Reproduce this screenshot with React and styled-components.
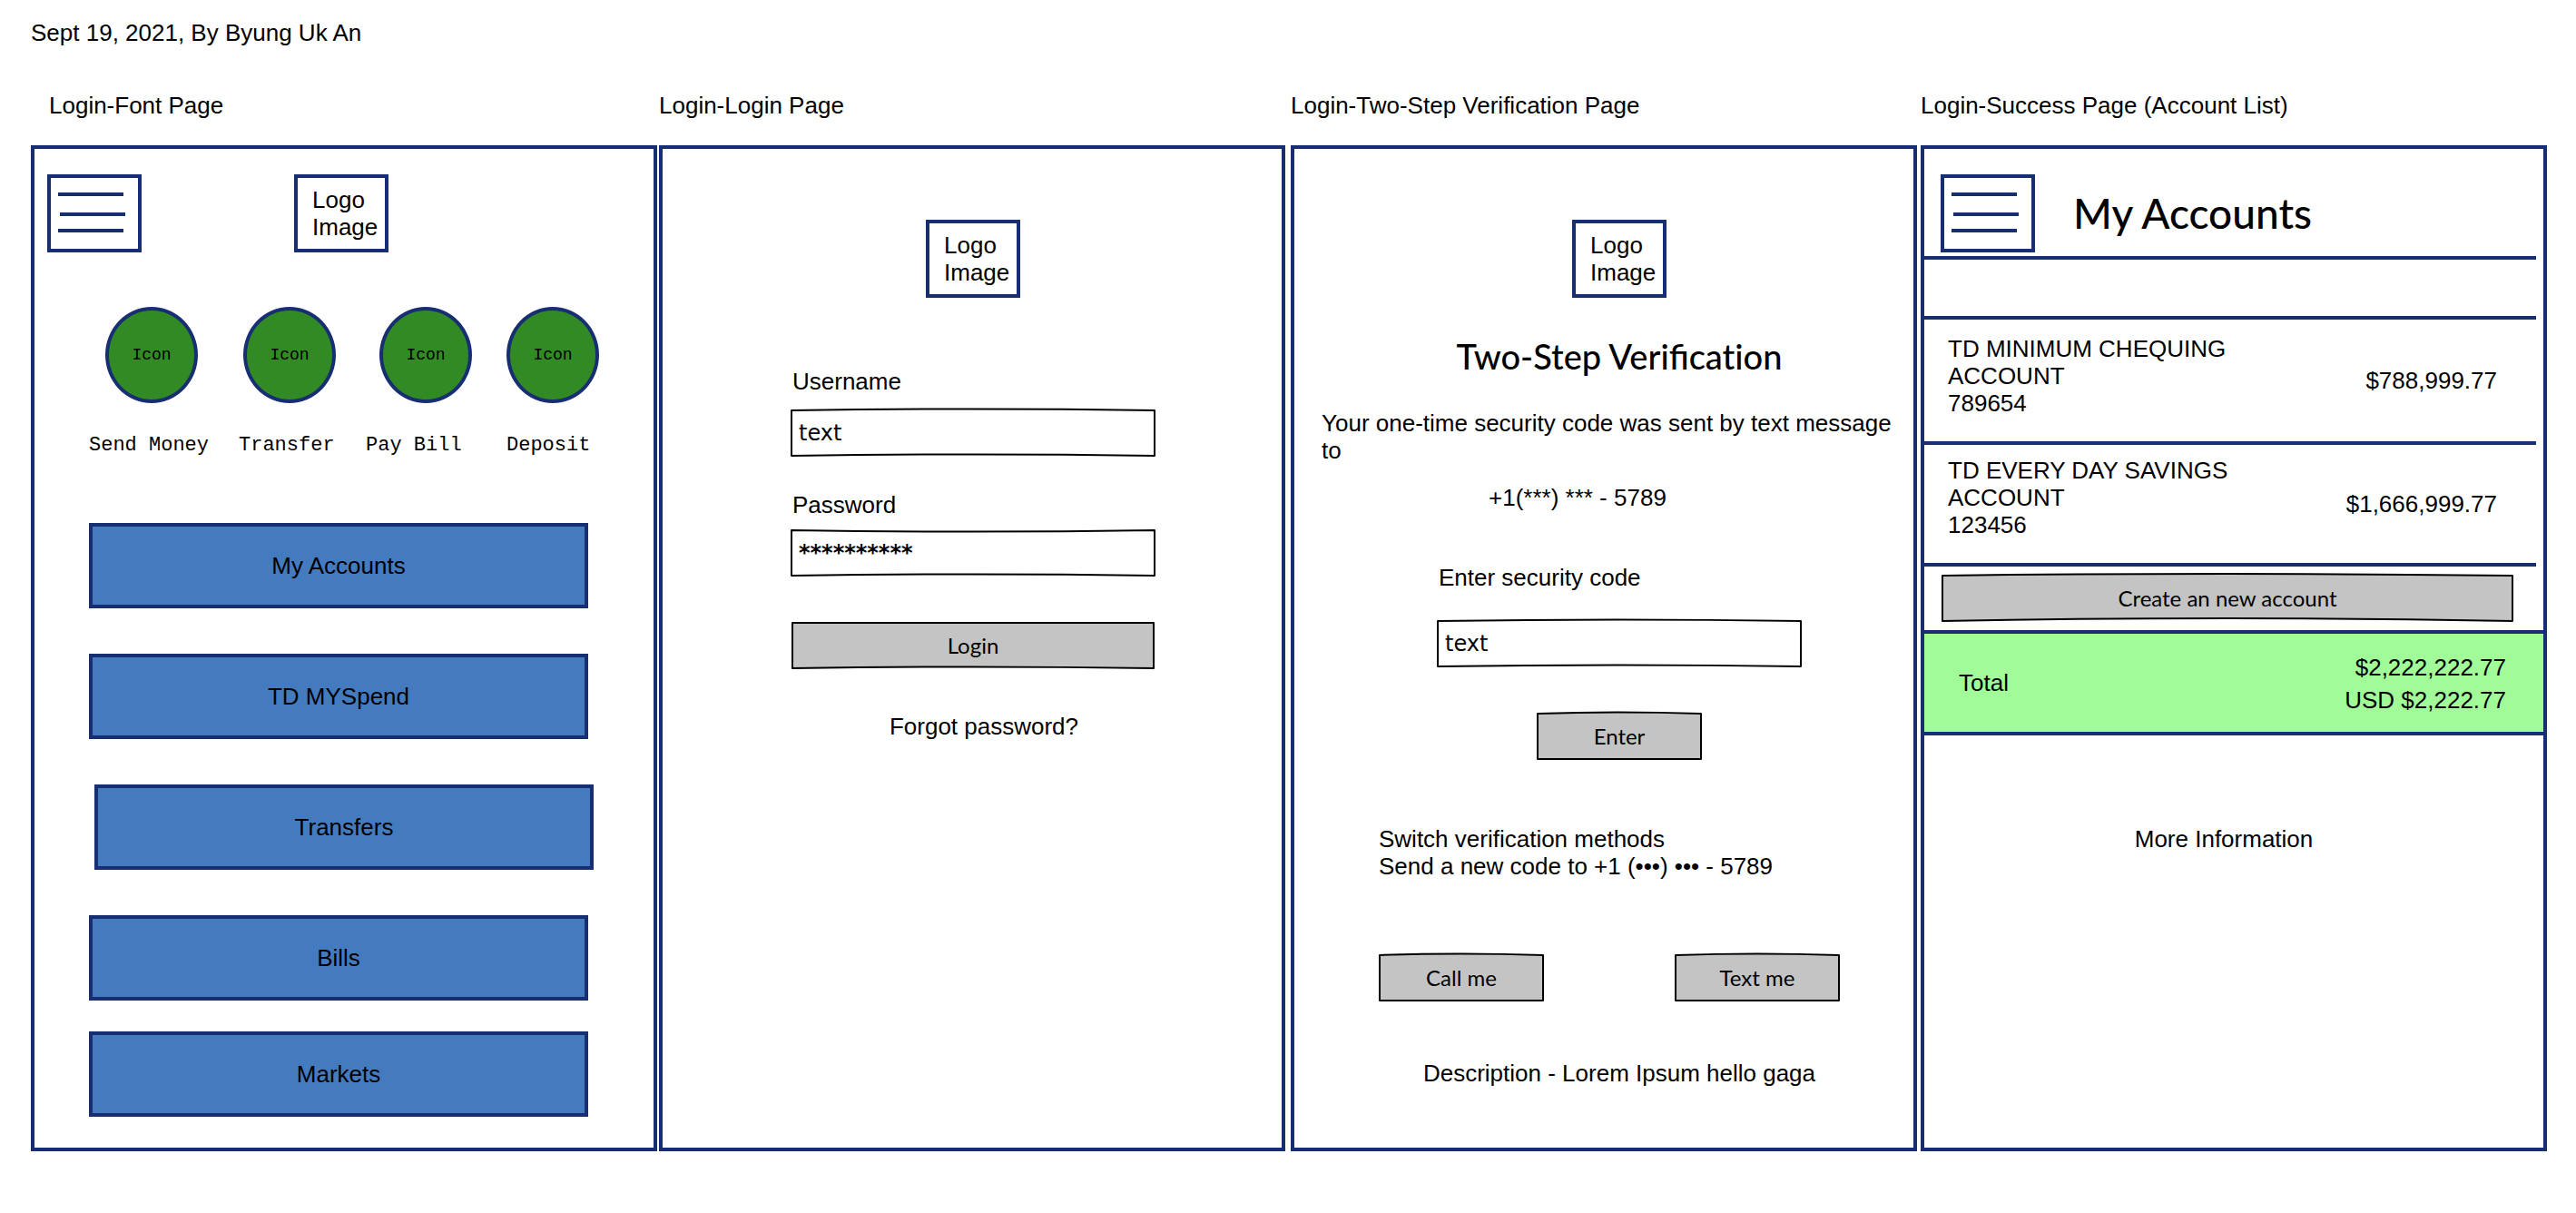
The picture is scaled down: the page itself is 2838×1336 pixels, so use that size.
import React from "react";
import styled, { createGlobalStyle } from "styled-components";

const navy = "#182e73";
const blue = "#447bbf";
const green = "#328a24";
const mint = "#a0fb98";
const grey = "#c4c4c4";

const sans = '"Liberation Sans", Arial, sans-serif';
const mono = '"Courier New", "Liberation Mono", monospace';
const lato = "Lato, sans-serif";
const hand = '"Comic Sans MS", "DejaVu Sans", sans-serif';

const GlobalStyle = createGlobalStyle`
  *, *::before, *::after { box-sizing: border-box; }
  body {
    margin: 0;
    background: #fff;
    color: #000;
    font: 26px/30px ${sans};
  }
  h1, h2, p, figure { margin: 0; font-weight: 400; }
  a { color: inherit; text-decoration: none; }
  button { cursor: pointer; color: inherit; }
`;

const Board = styled.main`
  padding: 21px 32px 68px 34px;
`;

const Note = styled.p`
  margin-bottom: 50px;
`;

const Screens = styled.div`
  display: flex;
  align-items: stretch;
`;

const Screen = styled.figure`
  flex: 1 1 0;
  min-width: 0;
  display: flex;
  flex-direction: column;
  margin-right: ${(p) => p.$after || 0}px;
`;

const Caption = styled.figcaption`
  margin-bottom: 29px;
  padding-left: ${(p) => (p.$indent ? 20 : 0)}px;
`;

const Frame = styled.section`
  flex: 1;
  display: flex;
  flex-direction: column;
  border: 4px solid ${navy};
`;

/* shared pieces */

const MenuBox = styled.button`
  width: 104px;
  height: 86px;
  padding: 0;
  border: 4px solid ${navy};
  background: #fff;
  display: block;
`;

const LogoBox = styled.div`
  width: 104px;
  height: 86px;
  border: 4px solid ${navy};
  padding: 9px 0 0 16px;
`;

const SketchBox = styled.div`
  position: relative;
  width: ${(p) => p.$width || "100%"};
  height: 52px;
`;

const SketchLine = styled.svg`
  position: absolute;
  inset: 1px;
  width: calc(100% - 2px);
  height: calc(100% - 2px);
  overflow: visible;
`;

const SketchButton = styled.button`
  position: relative;
  width: 100%;
  height: 100%;
  border: 0;
  padding: 0;
  background: transparent;
  font: 24px/30px ${lato};
`;

const SketchInput = styled.input`
  position: relative;
  display: block;
  width: 100%;
  height: 100%;
  border: 0;
  padding: 0 9px;
  background: transparent;
  color: #000;
  font: ${(p) => (p.$masked ? 700 : 400)} 24px/30px ${hand};
`;

const Field = styled.div`
  display: flex;
  flex-direction: column;
  gap: ${(p) => p.$gap}px;
  width: 402px;
`;

const FieldLabel = styled.label`
  padding-left: 2px;
`;

/* front page */

const TopBar = styled.header`
  display: flex;
  align-items: center;
  gap: 168px;
  padding: 28px 14px 0;
`;

const IconRow = styled.div`
  display: grid;
  grid-template-columns: 152fr 150fr 140fr 102fr;
  margin: 60px 60px 0 78px;
`;

const IconCircle = styled.button`
  width: 102px;
  height: 106px;
  border: 4px solid ${navy};
  border-radius: 50%;
  padding: 0;
  background: ${green};
  font: 18px/22px ${mono};
`;

const IconLabels = styled.div`
  display: grid;
  grid-template-columns: 165fr 140fr 155fr 94fr;
  margin: 34px 68px 0 60px;
  font: 22px/26px ${mono};
  white-space: nowrap;
`;

const MainNav = styled.nav`
  display: flex;
  flex-direction: column;
  padding: 72px 66px 34px 60px;
`;

const NavButton = styled.button`
  flex: none;
  width: 550px;
  height: 94px;
  margin-top: ${(p) => p.$gap}px;
  margin-left: ${(p) => (p.$stepped ? 6 : 0)}px;
  border: 4px solid ${navy};
  background: ${blue};
  font: 26px/30px ${sans};
`;

/* login page */

const LoginForm = styled.form`
  display: flex;
  flex-direction: column;
  align-items: center;
  padding: 78px 0 0 2px;
`;

const Fields = styled.div`
  display: flex;
  flex-direction: column;
  gap: 38px;
  margin: 77px 0 50px;
`;

const ForgotLink = styled.a`
  margin-top: 48px;
  padding-left: 24px;
`;

/* two-step page */

const Stack = styled.div`
  display: flex;
  flex-direction: column;
  align-items: center;
  padding: ${(p) => p.$top}px 0 0 34px;
`;

const StepTitle = styled.h1`
  margin-top: 42px;
  font: 500 38px/44px ${lato};
  white-space: nowrap;
`;

const SentNote = styled.p`
  padding: 37px 22px 0 30px;
`;

const Phone = styled.p`
  padding: 22px 0 0 214px;
`;

const EnterRow = styled.div`
  margin: 50px 0 72px;
`;

const Methods = styled.div`
  width: 530px;
`;

const MethodButtons = styled.div`
  display: flex;
  gap: 144px;
  margin: 82px 0 64px;
`;

/* account list page */

const AccountsHeader = styled.header`
  display: flex;
  align-items: center;
  gap: 42px;
  margin-right: 8px;
  padding: 28px 18px 4px;
  border-bottom: 4px solid ${navy};
`;

const AccountsTitle = styled.h1`
  font: 500 46px/58px ${lato};
`;

const EmptyStrip = styled.div`
  height: 66px;
  margin-right: 8px;
  border-bottom: 4px solid ${navy};
`;

const Accounts = styled.div`
  padding-right: 8px;
`;

const AccountTable = styled.table`
  width: 100%;
  border-spacing: 0;
`;

const AccountName = styled.th`
  padding: ${(p) => p.$top}px 0 27px 26px;
  border-bottom: 4px solid ${navy};
  text-align: left;
  font-weight: 400;
`;

const NameText = styled.div`
  width: 330px;
`;

const Amount = styled.td`
  padding: 0 43px 0 0;
  border-bottom: 4px solid ${navy};
  text-align: right;
`;

const CreateRow = styled.div`
  padding: 9px 33px 9px 19px;
`;

const TotalBand = styled.div`
  display: flex;
  align-items: center;
  justify-content: space-between;
  height: 116px;
  padding: 0 41px 0 38px;
  border: solid ${navy};
  border-width: 4px 0;
  background: ${mint};
`;

const TotalAmounts = styled.div`
  display: grid;
  gap: 6px;
  padding-top: 2px;
  text-align: right;
`;

const MoreLink = styled.a`
  align-self: center;
  margin-top: 99px;
  padding-right: 22px;
`;

/* Hand-drawn rectangle: `top` and `bottom` lift the middle of each edge. */
function Sketch({ width, top = 0, bottom = 0, fill = "#fff", children }) {
  return (
    <SketchBox $width={width}>
      <SketchLine viewBox="0 0 100 50" preserveAspectRatio="none" aria-hidden="true">
        <path
          d={`M0 0 Q50 ${-2 * top} 100 0 V50 Q50 ${50 - 2 * bottom} 0 50 Z`}
          fill={fill}
          stroke="#000"
          strokeWidth="2"
          strokeLinejoin="round"
          vectorEffect="non-scaling-stroke"
        />
      </SketchLine>
      {children}
    </SketchBox>
  );
}

function Menu() {
  return (
    <MenuBox type="button" aria-label="Menu">
      <svg width="96" height="78" viewBox="0 0 96 78" display="block" aria-hidden="true">
        <path d="M8 18H80M10 40H82M8 58H80" stroke={navy} strokeWidth="4" />
      </svg>
    </MenuBox>
  );
}

function Logo() {
  return (
    <LogoBox>
      Logo
      <br />
      Image
    </LogoBox>
  );
}

const shortcuts = [
  ["send", "Send Money"],
  ["transfer", "Transfer"],
  ["pay", "Pay Bill"],
  ["deposit", "Deposit"],
];

const links = [
  { text: "My Accounts", gap: 0 },
  { text: "TD MYSpend", gap: 50 },
  { text: "Transfers", gap: 50, stepped: true },
  { text: "Bills", gap: 50 },
  { text: "Markets", gap: 34 },
];

const accounts = [
  { name: "TD MINIMUM CHEQUING ACCOUNT", number: "789654", amount: "$788,999.77", top: 17 },
  { name: "TD EVERY DAY SAVINGS ACCOUNT", number: "123456", amount: "$1,666,999.77", top: 13 },
];

function FrontPage() {
  return (
    <Frame>
      <TopBar>
        <Menu />
        <Logo />
      </TopBar>
      <IconRow>
        {shortcuts.map(([id]) => (
          <IconCircle key={id} id={id} type="button">
            Icon
          </IconCircle>
        ))}
      </IconRow>
      <IconLabels>
        {shortcuts.map(([id, text]) => (
          <label key={id} htmlFor={id}>
            {text}
          </label>
        ))}
      </IconLabels>
      <MainNav>
        {links.map((l) => (
          <NavButton key={l.text} type="button" $gap={l.gap} $stepped={l.stepped}>
            {l.text}
          </NavButton>
        ))}
      </MainNav>
    </Frame>
  );
}

function LoginPage() {
  return (
    <Frame>
      <LoginForm onSubmit={(e) => e.preventDefault()}>
        <Logo />
        <Fields>
          <Field $gap={16}>
            <FieldLabel htmlFor="username">Username</FieldLabel>
            <Sketch top={1.5} bottom={1.5}>
              <SketchInput id="username" defaultValue="text" />
            </Sketch>
          </Field>
          <Field $gap={12}>
            <FieldLabel htmlFor="password">Password</FieldLabel>
            <Sketch top={-1.5} bottom={1.5}>
              <SketchInput id="password" $masked defaultValue="**********" />
            </Sketch>
          </Field>
        </Fields>
        <Sketch width="400px" bottom={1.5} fill={grey}>
          <SketchButton type="submit">Login</SketchButton>
        </Sketch>
        <ForgotLink href="#forgot">Forgot password?</ForgotLink>
      </LoginForm>
    </Frame>
  );
}

function TwoStepPage() {
  return (
    <Frame>
      <Stack $top={78}>
        <Logo />
        <StepTitle>
          Two-Step Verificat
          <wbr />
          ion
        </StepTitle>
      </Stack>
      <SentNote>Your one-time security code was sent by text message to</SentNote>
      <Phone>+1(***) *** - 5789</Phone>
      <Stack $top={58}>
        <Field $gap={32}>
          <FieldLabel htmlFor="code">Enter security code</FieldLabel>
          <Sketch top={1.5} bottom={1.5}>
            <SketchInput id="code" defaultValue="text" />
          </Sketch>
        </Field>
        <EnterRow>
          <Sketch width="182px" top={1.5} fill={grey}>
            <SketchButton type="button">Enter</SketchButton>
          </Sketch>
        </EnterRow>
        <Methods>
          <p>Switch verification methods</p>
          <p>Send a new code to +1 (•••) ••• - 5789</p>
          <MethodButtons>
            <Sketch width="182px" top={1.5} fill={grey}>
              <SketchButton type="button">Call me</SketchButton>
            </Sketch>
            <Sketch width="182px" top={1.5} fill={grey}>
              <SketchButton type="button">Text me</SketchButton>
            </Sketch>
          </MethodButtons>
        </Methods>
        <p>Description - Lorem Ipsum hello gaga</p>
      </Stack>
    </Frame>
  );
}

function AccountListPage() {
  return (
    <Frame>
      <AccountsHeader>
        <Menu />
        <AccountsTitle>My Accounts</AccountsTitle>
      </AccountsHeader>
      <EmptyStrip />
      <Accounts>
        <AccountTable>
          <tbody>
            {accounts.map((a) => (
              <tr key={a.number}>
                <AccountName scope="row" $top={a.top}>
                  <NameText>
                    {a.name}
                    <br />
                    {a.number}
                  </NameText>
                </AccountName>
                <Amount>{a.amount}</Amount>
              </tr>
            ))}
          </tbody>
        </AccountTable>
      </Accounts>
      <CreateRow>
        <Sketch top={2} bottom={3} fill={grey}>
          <SketchButton type="button">Create an new account</SketchButton>
        </Sketch>
      </CreateRow>
      <TotalBand>
        <span>Total</span>
        <TotalAmounts>
          <span>$2,222,222.77</span>
          <span>USD $2,222.77</span>
        </TotalAmounts>
      </TotalBand>
      <MoreLink href="#more">More Information</MoreLink>
    </Frame>
  );
}

export default function App() {
  return (
    <>
      <GlobalStyle />
      <Board>
        <Note>Sept 19, 2021, By Byung Uk An</Note>
        <Screens>
          <Screen $after={2}>
            <Caption $indent>Login-Font Page</Caption>
            <FrontPage />
          </Screen>
          <Screen $after={6}>
            <Caption>Login-Login Page</Caption>
            <LoginPage />
          </Screen>
          <Screen $after={4}>
            <Caption>Login-Two-Step Verification Page</Caption>
            <TwoStepPage />
          </Screen>
          <Screen>
            <Caption>Login-Success Page (Account List)</Caption>
            <AccountListPage />
          </Screen>
        </Screens>
      </Board>
    </>
  );
}
